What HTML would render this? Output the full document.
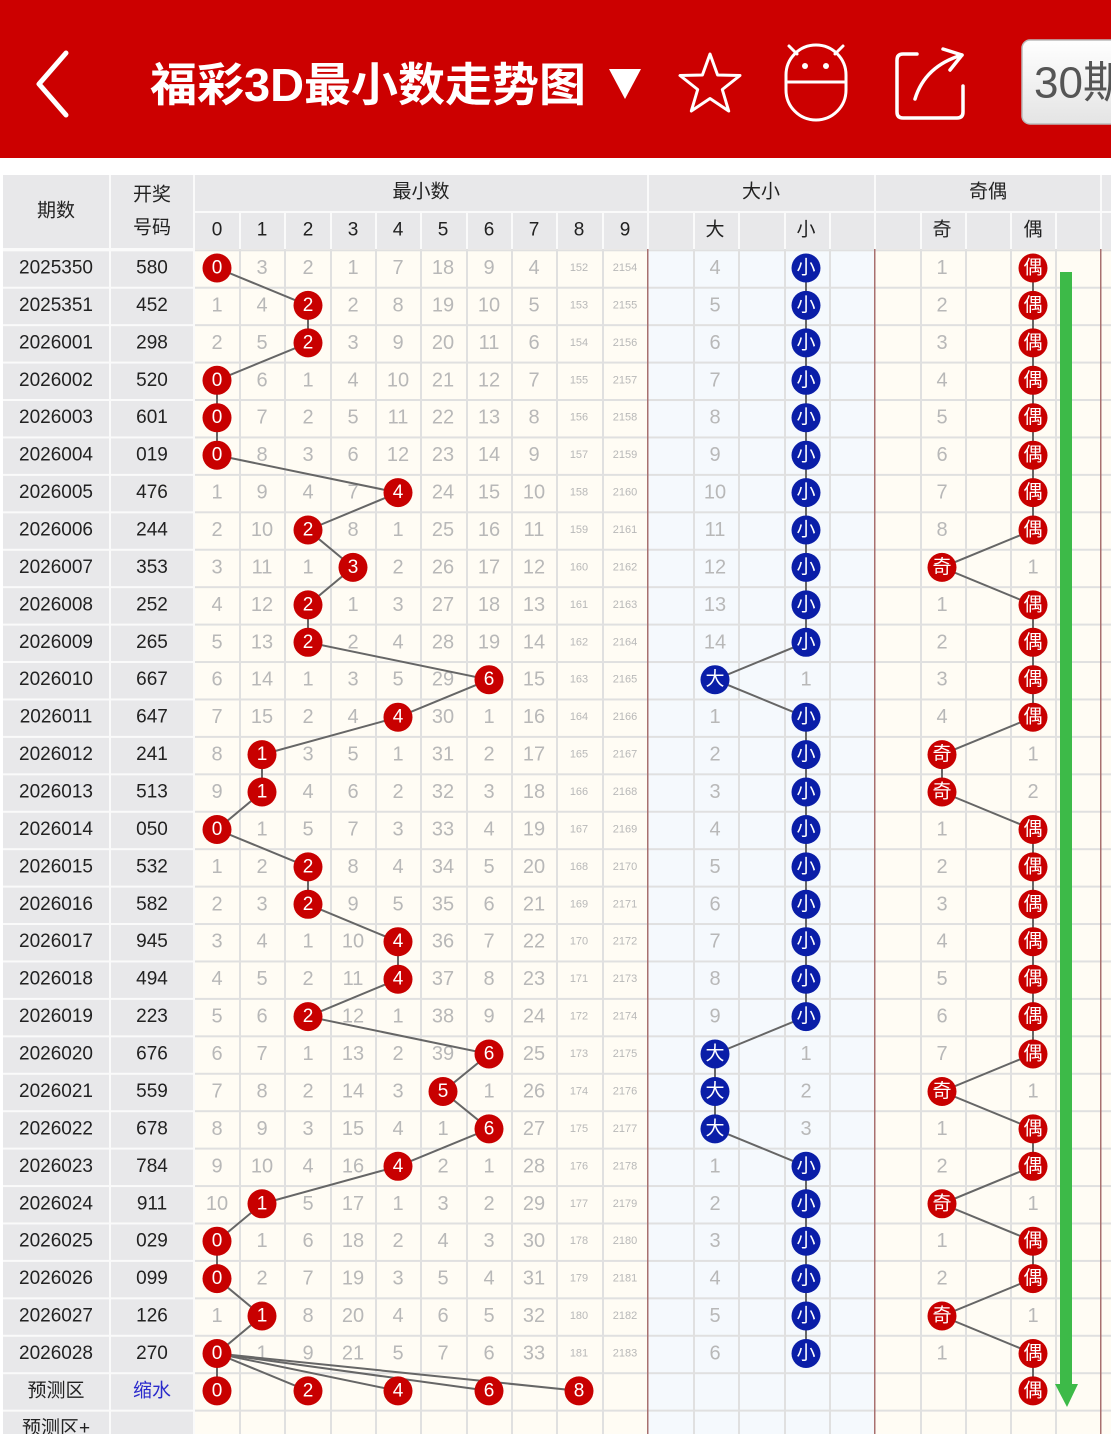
<!DOCTYPE html>
<html><head><meta charset="utf-8"><style>
html,body{margin:0;padding:0;background:#fff;}
svg{display:block;}
text{font-family:"Liberation Sans","Noto Sans CJK SC",sans-serif;text-anchor:middle;dominant-baseline:central;}
.r text{fill:#b8b8b8;font-size:20px;}
.r text.k{fill:#222;font-size:19px;}
.r text.s{font-size:11px;}
.h text{fill:#222;font-size:19px;}
.b text{fill:#fff;font-size:19px;}
</style></head><body>
<svg width="1111" height="1434" viewBox="0 0 1111 1434" xmlns="http://www.w3.org/2000/svg">
<defs>
<pattern id="hl" patternUnits="userSpaceOnUse" x="0" y="249.3" width="1111" height="37.43">
<rect x="0" y="0" width="1111" height="2" fill="#e0e0e0"/>
</pattern>
<pattern id="hlw" patternUnits="userSpaceOnUse" x="0" y="249.3" width="1111" height="37.43">
<rect x="0" y="0" width="1111" height="2" fill="#fafafa"/>
</pattern>
<linearGradient id="btn" x1="0" y1="0" x2="0" y2="1"><stop offset="0" stop-color="#ffffff"/><stop offset="1" stop-color="#e4e4e4"/></linearGradient>
</defs>
<!-- header -->
<rect x="0" y="0" width="1111" height="158" fill="#cc0000"/>
<polyline points="66,53 39,84 66,115" fill="none" stroke="#fff" stroke-width="5" stroke-linejoin="round" stroke-linecap="round"/>
<text x="150" y="85" style="text-anchor:start;fill:#fff;font-size:46px;font-weight:bold" textLength="436" lengthAdjust="spacingAndGlyphs">福彩3D最小数走势图</text>
<polygon points="609,69 641,69 625,99" fill="#fff"/>
<polygon points="710,54 717.6,75 740,75.5 722.3,89.5 728.7,111 710,98.5 691.3,111 697.7,89.5 680,75.5 702.4,75" fill="none" stroke="#fff" stroke-width="3" stroke-linejoin="round"/>
<rect x="786" y="45" width="60" height="75" rx="30" fill="none" stroke="#fff" stroke-width="3"/>
<line x1="786" y1="82" x2="846" y2="82" stroke="#fff" stroke-width="3"/>
<circle cx="805" cy="66" r="3" fill="#fff"/><circle cx="826" cy="66" r="3" fill="#fff"/>
<line x1="789" y1="46" x2="797" y2="54" stroke="#fff" stroke-width="3" stroke-linecap="round"/>
<line x1="843" y1="46" x2="835" y2="54" stroke="#fff" stroke-width="3" stroke-linecap="round"/>
<path d="M917,54 H903 Q897,54 897,60 V112 Q897,118 903,118 H957 Q963,118 963,112 V86" fill="none" stroke="#fff" stroke-width="3.5" stroke-linecap="round"/>
<path d="M915,99 Q925,66 962,55" fill="none" stroke="#fff" stroke-width="3.5" stroke-linecap="round"/>
<polyline points="943,49 962,55 950,70" fill="none" stroke="#fff" stroke-width="3.5" stroke-linecap="round" stroke-linejoin="round"/>
<rect x="1022" y="40" width="110" height="84" rx="8" fill="url(#btn)" stroke="#bbb" stroke-width="1.5"/>
<text x="1034" y="83" style="text-anchor:start;fill:#555;font-size:44px">30期</text>

<!-- table backgrounds -->
<rect x="3" y="175" width="1108" height="74" fill="#e8e8ea"/>
<rect x="3" y="249" width="191" height="1185" fill="#e8e8ea"/>
<rect x="194" y="249" width="454" height="1185" fill="#fffcf4"/>
<rect x="648" y="249" width="227" height="1185" fill="#f5f9fd"/>
<rect x="875" y="249" width="236" height="1185" fill="#fffcf4"/>
<rect x="194" y="249" width="917" height="1185" fill="url(#hl)"/>
<rect x="3" y="249" width="191" height="1185" fill="url(#hlw)"/>
<!-- header grid lines -->
<g fill="#fafafa">
<rect x="109" y="175" width="2" height="1259"/>
<rect x="193" y="175" width="2" height="1259"/>
<rect x="194" y="211" width="917" height="2"/>
<rect x="3" y="248" width="191" height="2"/>
<rect x="647" y="175" width="2" height="74"/>
<rect x="874" y="175" width="2" height="74"/>
<rect x="1100" y="175" width="2" height="74"/>
</g>
<g fill="#fafafa">
<rect x="239" y="213" width="2" height="36"/><rect x="284" y="213" width="2" height="36"/><rect x="330" y="213" width="2" height="36"/><rect x="375" y="213" width="2" height="36"/><rect x="420" y="213" width="2" height="36"/><rect x="466" y="213" width="2" height="36"/><rect x="511" y="213" width="2" height="36"/><rect x="556" y="213" width="2" height="36"/><rect x="602" y="213" width="2" height="36"/>
<rect x="693" y="213" width="2" height="36"/><rect x="738" y="213" width="2" height="36"/><rect x="784" y="213" width="2" height="36"/><rect x="829" y="213" width="2" height="36"/>
<rect x="920" y="213" width="2" height="36"/><rect x="965" y="213" width="2" height="36"/><rect x="1010" y="213" width="2" height="36"/><rect x="1055" y="213" width="2" height="36"/>
</g>
<g fill="#e0e0e0">
<rect x="239" y="249" width="2" height="1185"/><rect x="284" y="249" width="2" height="1185"/><rect x="330" y="249" width="2" height="1185"/><rect x="375" y="249" width="2" height="1185"/><rect x="420" y="249" width="2" height="1185"/><rect x="466" y="249" width="2" height="1185"/><rect x="511" y="249" width="2" height="1185"/><rect x="556" y="249" width="2" height="1185"/><rect x="602" y="249" width="2" height="1185"/>
<rect x="693" y="249" width="2" height="1185"/><rect x="738" y="249" width="2" height="1185"/><rect x="784" y="249" width="2" height="1185"/><rect x="829" y="249" width="2" height="1185"/>
<rect x="920" y="249" width="2" height="1185"/><rect x="965" y="249" width="2" height="1185"/><rect x="1010" y="249" width="2" height="1185"/><rect x="1055" y="249" width="2" height="1185"/>
</g>
<g fill="#a8706f">
<rect x="647" y="249" width="1.5" height="1185"/>
<rect x="874" y="249" width="1.5" height="1185"/>
<rect x="1100" y="249" width="1.5" height="1185"/>
</g>
<!-- header text -->
<g class="h">
<text x="56" y="211">期数</text>
<text x="152" y="195">开奖</text><text x="152" y="228">号码</text>
<text x="421" y="192">最小数</text><text x="761" y="192">大小</text><text x="988" y="192">奇偶</text>
<text x="217" y="230">0</text><text x="262" y="230">1</text><text x="308" y="230">2</text><text x="353" y="230">3</text><text x="398" y="230">4</text><text x="443" y="230">5</text><text x="489" y="230">6</text><text x="534" y="230">7</text><text x="579" y="230">8</text><text x="625" y="230">9</text>
<text x="715" y="230">大</text><text x="806" y="230">小</text><text x="942" y="230">奇</text><text x="1033" y="230">偶</text>
</g>
<!-- rows -->
<g class="r">
<g transform="translate(0,268)"><text class="k" x="56">2025350</text><text class="k" x="152">580</text><text x="262">3</text><text x="308">2</text><text x="353">1</text><text x="398">7</text><text x="443">18</text><text x="489">9</text><text x="534">4</text><text class="s" x="579">152</text><text class="s" x="625">2154</text><text x="715">4</text><text x="942">1</text></g>
<g transform="translate(0,305.4)"><text class="k" x="56">2025351</text><text class="k" x="152">452</text><text x="217">1</text><text x="262">4</text><text x="353">2</text><text x="398">8</text><text x="443">19</text><text x="489">10</text><text x="534">5</text><text class="s" x="579">153</text><text class="s" x="625">2155</text><text x="715">5</text><text x="942">2</text></g>
<g transform="translate(0,342.9)"><text class="k" x="56">2026001</text><text class="k" x="152">298</text><text x="217">2</text><text x="262">5</text><text x="353">3</text><text x="398">9</text><text x="443">20</text><text x="489">11</text><text x="534">6</text><text class="s" x="579">154</text><text class="s" x="625">2156</text><text x="715">6</text><text x="942">3</text></g>
<g transform="translate(0,380.3)"><text class="k" x="56">2026002</text><text class="k" x="152">520</text><text x="262">6</text><text x="308">1</text><text x="353">4</text><text x="398">10</text><text x="443">21</text><text x="489">12</text><text x="534">7</text><text class="s" x="579">155</text><text class="s" x="625">2157</text><text x="715">7</text><text x="942">4</text></g>
<g transform="translate(0,417.7)"><text class="k" x="56">2026003</text><text class="k" x="152">601</text><text x="262">7</text><text x="308">2</text><text x="353">5</text><text x="398">11</text><text x="443">22</text><text x="489">13</text><text x="534">8</text><text class="s" x="579">156</text><text class="s" x="625">2158</text><text x="715">8</text><text x="942">5</text></g>
<g transform="translate(0,455.2)"><text class="k" x="56">2026004</text><text class="k" x="152">019</text><text x="262">8</text><text x="308">3</text><text x="353">6</text><text x="398">12</text><text x="443">23</text><text x="489">14</text><text x="534">9</text><text class="s" x="579">157</text><text class="s" x="625">2159</text><text x="715">9</text><text x="942">6</text></g>
<g transform="translate(0,492.6)"><text class="k" x="56">2026005</text><text class="k" x="152">476</text><text x="217">1</text><text x="262">9</text><text x="308">4</text><text x="353">7</text><text x="443">24</text><text x="489">15</text><text x="534">10</text><text class="s" x="579">158</text><text class="s" x="625">2160</text><text x="715">10</text><text x="942">7</text></g>
<g transform="translate(0,530)"><text class="k" x="56">2026006</text><text class="k" x="152">244</text><text x="217">2</text><text x="262">10</text><text x="353">8</text><text x="398">1</text><text x="443">25</text><text x="489">16</text><text x="534">11</text><text class="s" x="579">159</text><text class="s" x="625">2161</text><text x="715">11</text><text x="942">8</text></g>
<g transform="translate(0,567.4)"><text class="k" x="56">2026007</text><text class="k" x="152">353</text><text x="217">3</text><text x="262">11</text><text x="308">1</text><text x="398">2</text><text x="443">26</text><text x="489">17</text><text x="534">12</text><text class="s" x="579">160</text><text class="s" x="625">2162</text><text x="715">12</text><text x="1033">1</text></g>
<g transform="translate(0,604.9)"><text class="k" x="56">2026008</text><text class="k" x="152">252</text><text x="217">4</text><text x="262">12</text><text x="353">1</text><text x="398">3</text><text x="443">27</text><text x="489">18</text><text x="534">13</text><text class="s" x="579">161</text><text class="s" x="625">2163</text><text x="715">13</text><text x="942">1</text></g>
<g transform="translate(0,642.3)"><text class="k" x="56">2026009</text><text class="k" x="152">265</text><text x="217">5</text><text x="262">13</text><text x="353">2</text><text x="398">4</text><text x="443">28</text><text x="489">19</text><text x="534">14</text><text class="s" x="579">162</text><text class="s" x="625">2164</text><text x="715">14</text><text x="942">2</text></g>
<g transform="translate(0,679.7)"><text class="k" x="56">2026010</text><text class="k" x="152">667</text><text x="217">6</text><text x="262">14</text><text x="308">1</text><text x="353">3</text><text x="398">5</text><text x="443">29</text><text x="534">15</text><text class="s" x="579">163</text><text class="s" x="625">2165</text><text x="806">1</text><text x="942">3</text></g>
<g transform="translate(0,717.2)"><text class="k" x="56">2026011</text><text class="k" x="152">647</text><text x="217">7</text><text x="262">15</text><text x="308">2</text><text x="353">4</text><text x="443">30</text><text x="489">1</text><text x="534">16</text><text class="s" x="579">164</text><text class="s" x="625">2166</text><text x="715">1</text><text x="942">4</text></g>
<g transform="translate(0,754.6)"><text class="k" x="56">2026012</text><text class="k" x="152">241</text><text x="217">8</text><text x="308">3</text><text x="353">5</text><text x="398">1</text><text x="443">31</text><text x="489">2</text><text x="534">17</text><text class="s" x="579">165</text><text class="s" x="625">2167</text><text x="715">2</text><text x="1033">1</text></g>
<g transform="translate(0,792)"><text class="k" x="56">2026013</text><text class="k" x="152">513</text><text x="217">9</text><text x="308">4</text><text x="353">6</text><text x="398">2</text><text x="443">32</text><text x="489">3</text><text x="534">18</text><text class="s" x="579">166</text><text class="s" x="625">2168</text><text x="715">3</text><text x="1033">2</text></g>
<g transform="translate(0,829.5)"><text class="k" x="56">2026014</text><text class="k" x="152">050</text><text x="262">1</text><text x="308">5</text><text x="353">7</text><text x="398">3</text><text x="443">33</text><text x="489">4</text><text x="534">19</text><text class="s" x="579">167</text><text class="s" x="625">2169</text><text x="715">4</text><text x="942">1</text></g>
<g transform="translate(0,866.9)"><text class="k" x="56">2026015</text><text class="k" x="152">532</text><text x="217">1</text><text x="262">2</text><text x="353">8</text><text x="398">4</text><text x="443">34</text><text x="489">5</text><text x="534">20</text><text class="s" x="579">168</text><text class="s" x="625">2170</text><text x="715">5</text><text x="942">2</text></g>
<g transform="translate(0,904.3)"><text class="k" x="56">2026016</text><text class="k" x="152">582</text><text x="217">2</text><text x="262">3</text><text x="353">9</text><text x="398">5</text><text x="443">35</text><text x="489">6</text><text x="534">21</text><text class="s" x="579">169</text><text class="s" x="625">2171</text><text x="715">6</text><text x="942">3</text></g>
<g transform="translate(0,941.7)"><text class="k" x="56">2026017</text><text class="k" x="152">945</text><text x="217">3</text><text x="262">4</text><text x="308">1</text><text x="353">10</text><text x="443">36</text><text x="489">7</text><text x="534">22</text><text class="s" x="579">170</text><text class="s" x="625">2172</text><text x="715">7</text><text x="942">4</text></g>
<g transform="translate(0,979.2)"><text class="k" x="56">2026018</text><text class="k" x="152">494</text><text x="217">4</text><text x="262">5</text><text x="308">2</text><text x="353">11</text><text x="443">37</text><text x="489">8</text><text x="534">23</text><text class="s" x="579">171</text><text class="s" x="625">2173</text><text x="715">8</text><text x="942">5</text></g>
<g transform="translate(0,1016.6)"><text class="k" x="56">2026019</text><text class="k" x="152">223</text><text x="217">5</text><text x="262">6</text><text x="353">12</text><text x="398">1</text><text x="443">38</text><text x="489">9</text><text x="534">24</text><text class="s" x="579">172</text><text class="s" x="625">2174</text><text x="715">9</text><text x="942">6</text></g>
<g transform="translate(0,1054)"><text class="k" x="56">2026020</text><text class="k" x="152">676</text><text x="217">6</text><text x="262">7</text><text x="308">1</text><text x="353">13</text><text x="398">2</text><text x="443">39</text><text x="534">25</text><text class="s" x="579">173</text><text class="s" x="625">2175</text><text x="806">1</text><text x="942">7</text></g>
<g transform="translate(0,1091.5)"><text class="k" x="56">2026021</text><text class="k" x="152">559</text><text x="217">7</text><text x="262">8</text><text x="308">2</text><text x="353">14</text><text x="398">3</text><text x="489">1</text><text x="534">26</text><text class="s" x="579">174</text><text class="s" x="625">2176</text><text x="806">2</text><text x="1033">1</text></g>
<g transform="translate(0,1128.9)"><text class="k" x="56">2026022</text><text class="k" x="152">678</text><text x="217">8</text><text x="262">9</text><text x="308">3</text><text x="353">15</text><text x="398">4</text><text x="443">1</text><text x="534">27</text><text class="s" x="579">175</text><text class="s" x="625">2177</text><text x="806">3</text><text x="942">1</text></g>
<g transform="translate(0,1166.3)"><text class="k" x="56">2026023</text><text class="k" x="152">784</text><text x="217">9</text><text x="262">10</text><text x="308">4</text><text x="353">16</text><text x="443">2</text><text x="489">1</text><text x="534">28</text><text class="s" x="579">176</text><text class="s" x="625">2178</text><text x="715">1</text><text x="942">2</text></g>
<g transform="translate(0,1203.8)"><text class="k" x="56">2026024</text><text class="k" x="152">911</text><text x="217">10</text><text x="308">5</text><text x="353">17</text><text x="398">1</text><text x="443">3</text><text x="489">2</text><text x="534">29</text><text class="s" x="579">177</text><text class="s" x="625">2179</text><text x="715">2</text><text x="1033">1</text></g>
<g transform="translate(0,1241.2)"><text class="k" x="56">2026025</text><text class="k" x="152">029</text><text x="262">1</text><text x="308">6</text><text x="353">18</text><text x="398">2</text><text x="443">4</text><text x="489">3</text><text x="534">30</text><text class="s" x="579">178</text><text class="s" x="625">2180</text><text x="715">3</text><text x="942">1</text></g>
<g transform="translate(0,1278.6)"><text class="k" x="56">2026026</text><text class="k" x="152">099</text><text x="262">2</text><text x="308">7</text><text x="353">19</text><text x="398">3</text><text x="443">5</text><text x="489">4</text><text x="534">31</text><text class="s" x="579">179</text><text class="s" x="625">2181</text><text x="715">4</text><text x="942">2</text></g>
<g transform="translate(0,1316)"><text class="k" x="56">2026027</text><text class="k" x="152">126</text><text x="217">1</text><text x="308">8</text><text x="353">20</text><text x="398">4</text><text x="443">6</text><text x="489">5</text><text x="534">32</text><text class="s" x="579">180</text><text class="s" x="625">2182</text><text x="715">5</text><text x="1033">1</text></g>
<g transform="translate(0,1353.5)"><text class="k" x="56">2026028</text><text class="k" x="152">270</text><text x="262">1</text><text x="308">9</text><text x="353">21</text><text x="398">5</text><text x="443">7</text><text x="489">6</text><text x="534">33</text><text class="s" x="579">181</text><text class="s" x="625">2183</text><text x="715">6</text><text x="942">1</text></g>
<g transform="translate(0,1390.9)"><text class="k" x="56">预测区</text><text class="k" x="152" style="fill:#2a2acc">缩水</text></g>
<g transform="translate(0,1428.3)"><text class="k" x="56">预测区+</text></g>
</g>
<!-- lines -->
<g fill="none" stroke="#666" stroke-width="2">
<polyline points="217,268 308,305.4 308,342.9 217,380.3 217,417.7 217,455.2 398,492.6 308,530 353,567.4 308,604.9 308,642.3 489,679.7 398,717.2 262,754.6 262,792 217,829.5 308,866.9 308,904.3 398,941.7 398,979.2 308,1016.6 489,1054 443,1091.5 489,1128.9 398,1166.3 262,1203.8 217,1241.2 217,1278.6 262,1316 217,1353.5 217,1390.9"/>
<line x1="217" y1="1353.5" x2="308" y2="1390.9"/><line x1="217" y1="1353.5" x2="398" y2="1390.9"/><line x1="217" y1="1353.5" x2="489" y2="1390.9"/><line x1="217" y1="1353.5" x2="579" y2="1390.9"/>
<polyline points="806,268 806,642.3 715,679.7 806,717.2 806,1016.6 715,1054 715,1128.9 806,1166.3 806,1353.5"/>
<polyline points="1033,268 1033,530 942,567.4 1033,604.9 1033,717.2 942,754.6 942,792 1033,829.5 1033,1054 942,1091.5 1033,1128.9 1033,1166.3 942,1203.8 1033,1241.2 1033,1278.6 942,1316 1033,1353.5 1033,1390.9"/>
</g>
<!-- green arrow -->
<rect x="1060" y="272" width="12" height="1114" fill="#3dba48"/>
<polygon points="1055,1384 1078,1384 1067,1407" fill="#3dba48"/>
<!-- balls digits -->
<g class="b">
<g fill="#c80000">
<circle cx="217" cy="268" r="14.5"/><circle cx="308" cy="305.4" r="14.5"/><circle cx="308" cy="342.9" r="14.5"/><circle cx="217" cy="380.3" r="14.5"/><circle cx="217" cy="417.7" r="14.5"/><circle cx="217" cy="455.2" r="14.5"/><circle cx="398" cy="492.6" r="14.5"/><circle cx="308" cy="530" r="14.5"/><circle cx="353" cy="567.4" r="14.5"/><circle cx="308" cy="604.9" r="14.5"/><circle cx="308" cy="642.3" r="14.5"/><circle cx="489" cy="679.7" r="14.5"/><circle cx="398" cy="717.2" r="14.5"/><circle cx="262" cy="754.6" r="14.5"/><circle cx="262" cy="792" r="14.5"/><circle cx="217" cy="829.5" r="14.5"/><circle cx="308" cy="866.9" r="14.5"/><circle cx="308" cy="904.3" r="14.5"/><circle cx="398" cy="941.7" r="14.5"/><circle cx="398" cy="979.2" r="14.5"/><circle cx="308" cy="1016.6" r="14.5"/><circle cx="489" cy="1054" r="14.5"/><circle cx="443" cy="1091.5" r="14.5"/><circle cx="489" cy="1128.9" r="14.5"/><circle cx="398" cy="1166.3" r="14.5"/><circle cx="262" cy="1203.8" r="14.5"/><circle cx="217" cy="1241.2" r="14.5"/><circle cx="217" cy="1278.6" r="14.5"/><circle cx="262" cy="1316" r="14.5"/><circle cx="217" cy="1353.5" r="14.5"/>
<circle cx="217" cy="1390.9" r="14.5"/><circle cx="308" cy="1390.9" r="14.5"/><circle cx="398" cy="1390.9" r="14.5"/><circle cx="489" cy="1390.9" r="14.5"/><circle cx="579" cy="1390.9" r="14.5"/>
</g>
<text x="217" y="268">0</text><text x="308" y="305.4">2</text><text x="308" y="342.9">2</text><text x="217" y="380.3">0</text><text x="217" y="417.7">0</text><text x="217" y="455.2">0</text><text x="398" y="492.6">4</text><text x="308" y="530">2</text><text x="353" y="567.4">3</text><text x="308" y="604.9">2</text><text x="308" y="642.3">2</text><text x="489" y="679.7">6</text><text x="398" y="717.2">4</text><text x="262" y="754.6">1</text><text x="262" y="792">1</text><text x="217" y="829.5">0</text><text x="308" y="866.9">2</text><text x="308" y="904.3">2</text><text x="398" y="941.7">4</text><text x="398" y="979.2">4</text><text x="308" y="1016.6">2</text><text x="489" y="1054">6</text><text x="443" y="1091.5">5</text><text x="489" y="1128.9">6</text><text x="398" y="1166.3">4</text><text x="262" y="1203.8">1</text><text x="217" y="1241.2">0</text><text x="217" y="1278.6">0</text><text x="262" y="1316">1</text><text x="217" y="1353.5">0</text>
<text x="217" y="1390.9">0</text><text x="308" y="1390.9">2</text><text x="398" y="1390.9">4</text><text x="489" y="1390.9">6</text><text x="579" y="1390.9">8</text>
</g>
<!-- 大小 balls -->
<g class="b">
<g fill="#0a1ea8">
<circle cx="806" cy="268" r="14.5"/><circle cx="806" cy="305.4" r="14.5"/><circle cx="806" cy="342.9" r="14.5"/><circle cx="806" cy="380.3" r="14.5"/><circle cx="806" cy="417.7" r="14.5"/><circle cx="806" cy="455.2" r="14.5"/><circle cx="806" cy="492.6" r="14.5"/><circle cx="806" cy="530" r="14.5"/><circle cx="806" cy="567.4" r="14.5"/><circle cx="806" cy="604.9" r="14.5"/><circle cx="806" cy="642.3" r="14.5"/><circle cx="715" cy="679.7" r="14.5"/><circle cx="806" cy="717.2" r="14.5"/><circle cx="806" cy="754.6" r="14.5"/><circle cx="806" cy="792" r="14.5"/><circle cx="806" cy="829.5" r="14.5"/><circle cx="806" cy="866.9" r="14.5"/><circle cx="806" cy="904.3" r="14.5"/><circle cx="806" cy="941.7" r="14.5"/><circle cx="806" cy="979.2" r="14.5"/><circle cx="806" cy="1016.6" r="14.5"/><circle cx="715" cy="1054" r="14.5"/><circle cx="715" cy="1091.5" r="14.5"/><circle cx="715" cy="1128.9" r="14.5"/><circle cx="806" cy="1166.3" r="14.5"/><circle cx="806" cy="1203.8" r="14.5"/><circle cx="806" cy="1241.2" r="14.5"/><circle cx="806" cy="1278.6" r="14.5"/><circle cx="806" cy="1316" r="14.5"/><circle cx="806" cy="1353.5" r="14.5"/>
</g>
<text x="806" y="268">小</text><text x="806" y="305.4">小</text><text x="806" y="342.9">小</text><text x="806" y="380.3">小</text><text x="806" y="417.7">小</text><text x="806" y="455.2">小</text><text x="806" y="492.6">小</text><text x="806" y="530">小</text><text x="806" y="567.4">小</text><text x="806" y="604.9">小</text><text x="806" y="642.3">小</text><text x="715" y="679.7">大</text><text x="806" y="717.2">小</text><text x="806" y="754.6">小</text><text x="806" y="792">小</text><text x="806" y="829.5">小</text><text x="806" y="866.9">小</text><text x="806" y="904.3">小</text><text x="806" y="941.7">小</text><text x="806" y="979.2">小</text><text x="806" y="1016.6">小</text><text x="715" y="1054">大</text><text x="715" y="1091.5">大</text><text x="715" y="1128.9">大</text><text x="806" y="1166.3">小</text><text x="806" y="1203.8">小</text><text x="806" y="1241.2">小</text><text x="806" y="1278.6">小</text><text x="806" y="1316">小</text><text x="806" y="1353.5">小</text>
</g>
<!-- 奇偶 balls -->
<g class="b">
<g fill="#c80000">
<circle cx="1033" cy="268" r="14.5"/><circle cx="1033" cy="305.4" r="14.5"/><circle cx="1033" cy="342.9" r="14.5"/><circle cx="1033" cy="380.3" r="14.5"/><circle cx="1033" cy="417.7" r="14.5"/><circle cx="1033" cy="455.2" r="14.5"/><circle cx="1033" cy="492.6" r="14.5"/><circle cx="1033" cy="530" r="14.5"/><circle cx="942" cy="567.4" r="14.5"/><circle cx="1033" cy="604.9" r="14.5"/><circle cx="1033" cy="642.3" r="14.5"/><circle cx="1033" cy="679.7" r="14.5"/><circle cx="1033" cy="717.2" r="14.5"/><circle cx="942" cy="754.6" r="14.5"/><circle cx="942" cy="792" r="14.5"/><circle cx="1033" cy="829.5" r="14.5"/><circle cx="1033" cy="866.9" r="14.5"/><circle cx="1033" cy="904.3" r="14.5"/><circle cx="1033" cy="941.7" r="14.5"/><circle cx="1033" cy="979.2" r="14.5"/><circle cx="1033" cy="1016.6" r="14.5"/><circle cx="1033" cy="1054" r="14.5"/><circle cx="942" cy="1091.5" r="14.5"/><circle cx="1033" cy="1128.9" r="14.5"/><circle cx="1033" cy="1166.3" r="14.5"/><circle cx="942" cy="1203.8" r="14.5"/><circle cx="1033" cy="1241.2" r="14.5"/><circle cx="1033" cy="1278.6" r="14.5"/><circle cx="942" cy="1316" r="14.5"/><circle cx="1033" cy="1353.5" r="14.5"/><circle cx="1033" cy="1390.9" r="14.5"/>
</g>
<text x="1033" y="268">偶</text><text x="1033" y="305.4">偶</text><text x="1033" y="342.9">偶</text><text x="1033" y="380.3">偶</text><text x="1033" y="417.7">偶</text><text x="1033" y="455.2">偶</text><text x="1033" y="492.6">偶</text><text x="1033" y="530">偶</text><text x="942" y="567.4">奇</text><text x="1033" y="604.9">偶</text><text x="1033" y="642.3">偶</text><text x="1033" y="679.7">偶</text><text x="1033" y="717.2">偶</text><text x="942" y="754.6">奇</text><text x="942" y="792">奇</text><text x="1033" y="829.5">偶</text><text x="1033" y="866.9">偶</text><text x="1033" y="904.3">偶</text><text x="1033" y="941.7">偶</text><text x="1033" y="979.2">偶</text><text x="1033" y="1016.6">偶</text><text x="1033" y="1054">偶</text><text x="942" y="1091.5">奇</text><text x="1033" y="1128.9">偶</text><text x="1033" y="1166.3">偶</text><text x="942" y="1203.8">奇</text><text x="1033" y="1241.2">偶</text><text x="1033" y="1278.6">偶</text><text x="942" y="1316">奇</text><text x="1033" y="1353.5">偶</text><text x="1033" y="1390.9">偶</text>
</g>
</svg>
</body></html>
